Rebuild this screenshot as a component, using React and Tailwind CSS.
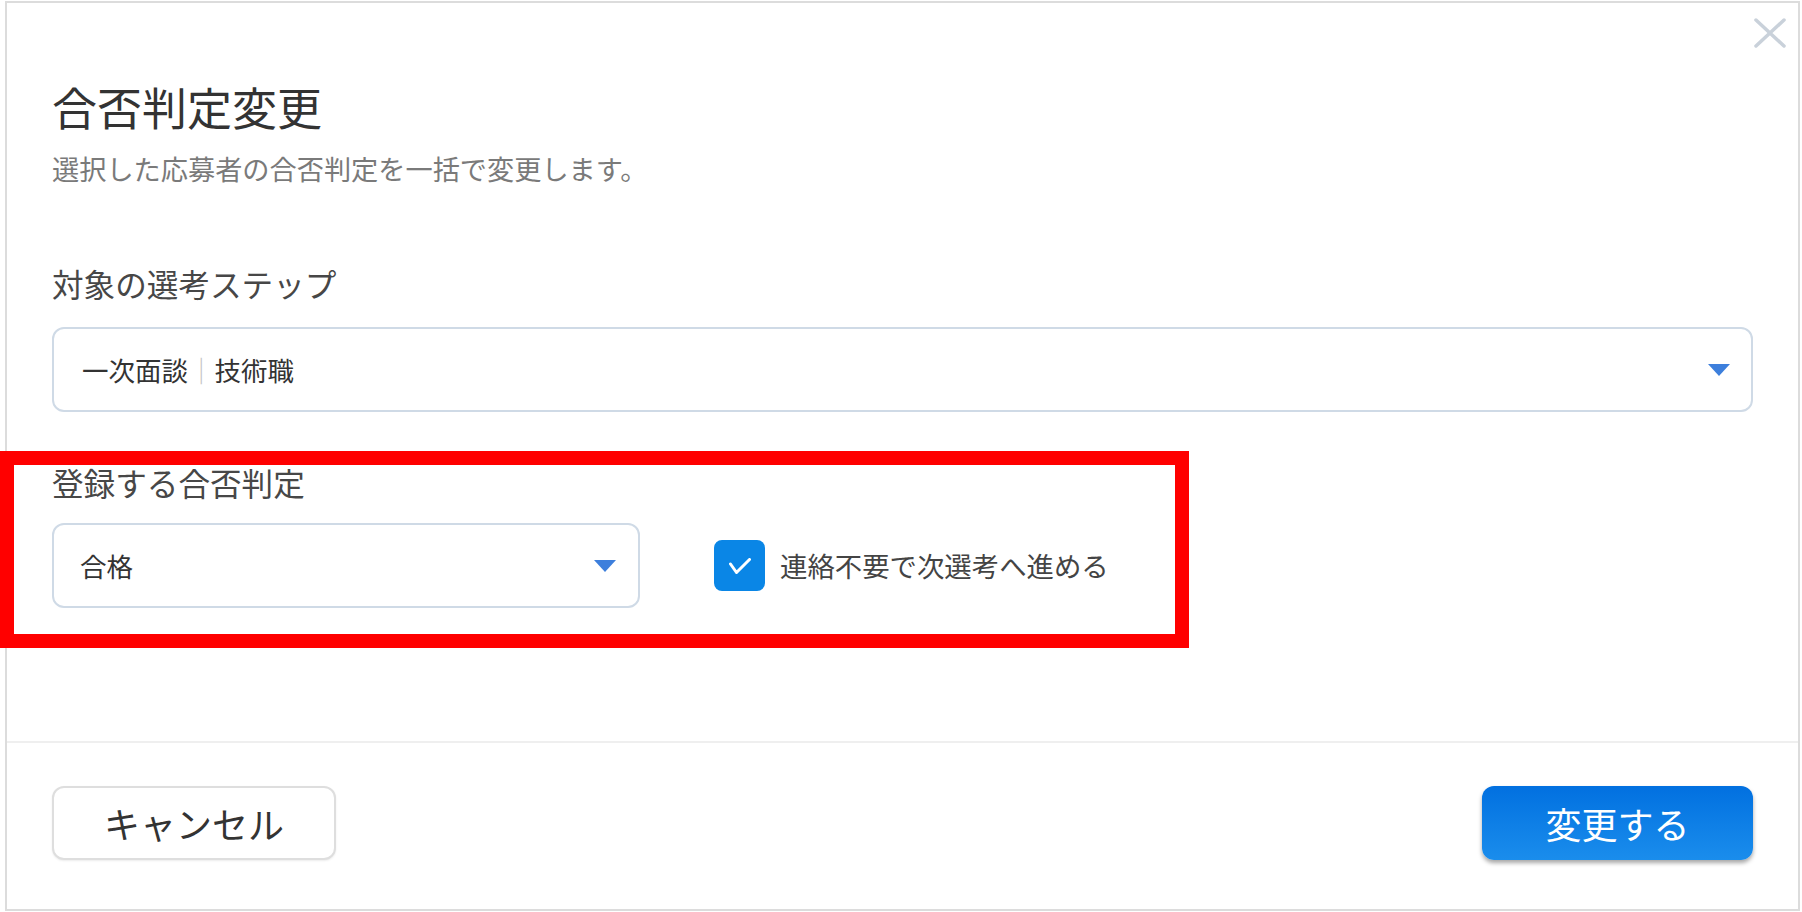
import { useState } from "react";

const Caret = () => (
  <svg width="22" height="12" viewBox="0 0 22 12" className="shrink-0">
    <path d="M0 0 H22 L11 12 Z" fill="#3d7fdc" />
  </svg>
);

const App = () => {
  const [skipContact, setSkipContact] = useState(true);

  return (
    <div className="relative w-[1802px] h-[912px] bg-white font-['Noto_Sans_CJK_JP','Noto_Sans',sans-serif]">
      <div className="relative ml-[5px] mt-[1px] w-[1795px] h-[910px] border-2 border-[#dcdcdc] flex flex-col">
        {/* close */}
        <button className="absolute top-[15px] right-[12px] w-[32px] h-[30px]">
          <svg width="32" height="30" viewBox="0 0 32 30">
            <path
              d="M2 2 L30 28 M30 2 L2 28"
              stroke="#c9d1da"
              strokeWidth="3.5"
              strokeLinecap="round"
            />
          </svg>
        </button>

        <div className="px-[45px] pt-[82px] h-[738px]">
          <h2 className="text-[45px] leading-[44px] text-[#333333]">
            合否判定変更
          </h2>
          <p className="mt-[26px] text-[27.2px] leading-[26px] text-[#7a7a7a]">
            選択した応募者の合否判定を一括で変更します。
          </p>

          <div className="mt-[87px] text-[31.6px] leading-[31px] text-[#474747]">
            対象の選考ステップ
          </div>
          <div className="mt-[28px] h-[85px] rounded-[12px] border-2 border-[#cfdae6] flex items-center justify-between pl-[28px] pr-[21px]">
            <span className="text-[26.5px] text-[#333333]">
              一次面談<span className="text-[#c4c4c4]">｜</span>技術職
            </span>
            <Caret />
          </div>

          <div className="mt-[55px] text-[31.6px] leading-[31px] text-[#474747]">
            登録する合否判定
          </div>
          <div className="mt-[25px] flex items-center">
            <div className="w-[588px] h-[85px] rounded-[12px] border-2 border-[#cfdae6] flex items-center justify-between pl-[26px] pr-[22px]">
              <span className="text-[26.5px] text-[#333333]">合格</span>
              <Caret />
            </div>
            <label className="ml-[74px] flex items-center gap-[15px] cursor-pointer">
              <span
                onClick={() => setSkipContact(!skipContact)}
                className={`w-[51px] h-[51px] rounded-[8px] flex items-center justify-center ${
                  skipContact ? "bg-[#0a86e6]" : "bg-white border-2 border-[#cfdae6]"
                }`}
              >
                {skipContact && (
                  <svg width="22" height="16" viewBox="0 0 22 16">
                    <path
                      d="M1.5 6 L7.5 14.5 L20.5 1.5"
                      stroke="white"
                      strokeWidth="3"
                      fill="none"
                      strokeLinecap="round"
                      strokeLinejoin="round"
                    />
                  </svg>
                )}
              </span>
              <span className="text-[27.4px] text-[#444444]">
                連絡不要で次選考へ進める
              </span>
            </label>
          </div>
        </div>

        <div className="border-t-2 border-[#efefef] px-[45px] pt-[43px] flex justify-between">
          <button className="w-[284px] h-[74px] rounded-[12px] border-2 border-[#dedede] bg-white text-[36px] text-[#333333] shadow-[0_1px_2px_rgba(0,0,0,0.08)]">
            キャンセル
          </button>
          <button className="w-[271px] h-[74px] rounded-[12px] bg-gradient-to-b from-[#0270e0] to-[#1a8dec] text-[36px] text-white shadow-[0_3px_4px_rgba(0,0,0,0.35)]">
            変更する
          </button>
        </div>
      </div>

      {/* annotation box */}
      <div className="absolute left-0 top-[450px] w-[1189px] h-[197px] border-[14px] border-[#ff0000] pointer-events-none" />
    </div>
  );
};

export default App;
